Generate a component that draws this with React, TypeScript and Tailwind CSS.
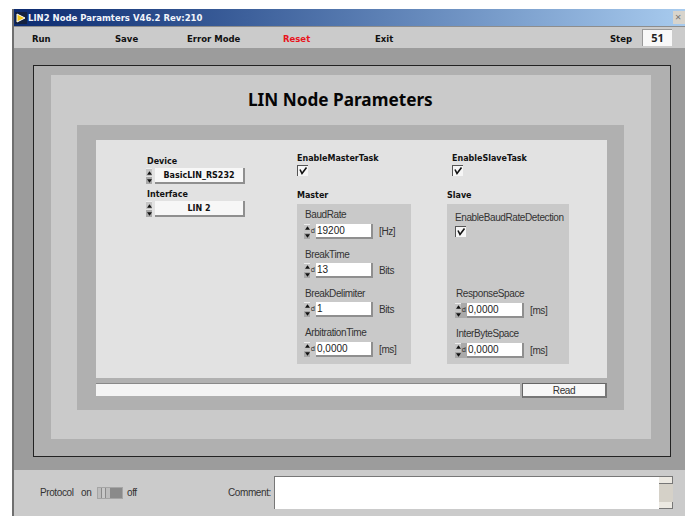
import type { ReactNode } from "react";

const bold = "font-bold text-[8px] leading-[12px] text-[#111] [font-family:'DejaVu_Sans',sans-serif]";
const strip = "font-bold text-[8.5px] leading-[12px] text-[#111] [font-family:'DejaVu_Sans',sans-serif]";
const plain = "text-[10px] leading-[12px] tracking-[-0.4px] text-[#333] [font-family:'Liberation_Sans',sans-serif]";

function Check({ className = "" }: { className?: string }) {
  return (
    <div className={`w-[11px] h-[11px] bg-[#f6f6f6] border-l border-t border-[#555] ${className}`}>
      <svg viewBox="0 0 10 10" className="w-[10px] h-[10px]">
        <path d="M2 3.5 L4 7.5 L8.5 1.5" fill="none" stroke="#111" strokeWidth="1.6" />
      </svg>
    </div>
  );
}

// up/down arrows used by the ring and numeric controls
function Spinner() {
  return (
    <div className="w-[6px] h-full flex flex-col gap-px shrink-0">
      <div className="flex-1 bg-[#c4c4c4] border-t border-[#eee] flex items-center justify-center">
        <svg viewBox="0 0 6 4" className="w-[5px] h-[4px]"><path d="M3 0 L6 4 L0 4 Z" fill="#111" /></svg>
      </div>
      <div className="flex-1 bg-[#a8a8a8] flex items-center justify-center">
        <svg viewBox="0 0 6 4" className="w-[5px] h-[4px]"><path d="M0 0 L6 0 L3 4 Z" fill="#111" /></svg>
      </div>
    </div>
  );
}

function Ring({ label, value, top }: { label: string; value: string; top: string }) {
  return (
    <div className={top}>
      <div className={`${bold} pl-px`}>{label}</div>
      <div className="flex h-[16px] items-stretch">
        <Spinner />
        <div className={`${bold} ml-[3px] w-[90px] bg-[#f7f7f7] border-r-2 border-b-2 border-[#8f8f8f] text-center !leading-[16px]`}>
          {value}
        </div>
      </div>
    </div>
  );
}

function NumRow({ value, unit, tint }: { value: string; unit: string; tint?: boolean }) {
  return (
    <div className="flex h-[15px] items-stretch">
      <Spinner />
      <div className={`w-[6px] text-[7px] leading-[13px] text-[#333] text-right pr-px ${tint ? "bg-[#aaaaaa]" : ""}`}>d</div>
      <div className="w-[57px] pl-px bg-white border-r-2 border-b-2 border-[#8f8f8f] text-[10px] leading-[14px] text-[#222] [font-family:'Liberation_Sans',sans-serif]">
        {value}
      </div>
      <div className={`${plain} ml-[6px] !leading-[15px]`}>{unit}</div>
    </div>
  );
}

function Labeled({ label, className, children }: { label: string; className: string; children: ReactNode }) {
  return (
    <div className={className}>
      <div className={plain}>{label}</div>
      {children}
    </div>
  );
}

function Menu({ w, red, children }: { w: string; red?: boolean; children: ReactNode }) {
  return <div className={`${w} ${strip} pt-[3px] ${red ? "!text-[#e8141c]" : ""}`}>{children}</div>;
}

export default function App() {
  return (
    <div
      className="w-[685px] h-[518px] overflow-hidden bg-white pl-[12px] pt-[9px]"
      style={{ fontFamily: '"Noto Sans", "Liberation Sans", sans-serif' }}
    >
      <div className="h-[507px] border-l-2 border-[#6f6f6f] flex flex-col">
        {/* title bar */}
        <div className="h-[17px] shrink-0 flex items-center bg-gradient-to-r from-[#0c2a70] to-[#a8cbee] pl-px">
          <svg viewBox="0 0 12 12" className="w-[12px] h-[12px] shrink-0">
            <rect width="12" height="12" fill="#14213f" />
            <path d="M2 2 L10 6 L2 10 Z" fill="#f2c81e" stroke="#fff" strokeWidth="1" />
          </svg>
          <span className={`${strip} ml-[1px] pt-px !text-[#f2f5fb]`}>LIN2 Node Paramters V46.2 Rev:210</span>
          <div className="ml-auto w-[12px] h-[13px] bg-[#d8d4cc] text-[11px] leading-[12px] text-[#777] pl-[2px]">×</div>
        </div>
        <div className="h-px shrink-0 bg-[#8d8d8d]" />

        {/* menu strip */}
        <div className="h-[21px] shrink-0 bg-[#cbcbcb] flex items-center pl-[18px]">
          <Menu w="w-[83px]">Run</Menu>
          <Menu w="w-[72px]">Save</Menu>
          <Menu w="w-[96px]">Error Mode</Menu>
          <Menu w="w-[92px]" red>Reset</Menu>
          <Menu w="w-[235px]">Exit</Menu>
          <Menu w="w-[32px]">Step</Menu>
          <div className="w-[30px] h-[17px] bg-[#f8f8f8] border-t border-l border-[#999] font-bold text-[11px] leading-[15px] text-[#222] text-center">51</div>
        </div>

        {/* main area */}
        <div className="h-[422px] shrink-0 bg-[#9c9c9c] pl-[19px] pt-[17px]">
          <div className="w-[638px] h-[392px] border border-[#222] bg-[#b0b0b0] pl-[17px] pt-[9px]">
            <div className="w-[600px] h-[364px] bg-[#cacaca] pt-[14px]">
              <div className="pl-[197px] font-bold text-[17.2px] leading-[22px] text-[#050505]">LIN Node Parameters</div>
              <div className="ml-[26px] mt-[14px] w-[547px] h-[285px] bg-[#b0b0b0] pl-[19px] pt-[15px]">
                <div className="w-[511px] h-[238px] bg-[#e2e2e2] flex">
                  {/* device column */}
                  <div className="ml-[50px] w-[151px] shrink-0">
                    <Ring label="Device" value="BasicLIN_RS232" top="mt-[16px]" />
                    <Ring label="Interface" value="LIN 2" top="mt-[5px]" />
                  </div>

                  {/* master column */}
                  <div className="w-[150px] shrink-0">
                    <div className={`${bold} mt-[13px]`}>EnableMasterTask</div>
                    <Check />
                    <div className={`${bold} mt-[14px]`}>Master</div>
                    <div className="mt-[2px] w-[114px] h-[160px] bg-[#c9c9c9] pl-[7px] pt-[5px]">
                      <Labeled label="BaudRate" className="pl-px">
                        <div className="-ml-px mt-[3px]"><NumRow value="19200" unit="[Hz]" /></div>
                      </Labeled>
                      <Labeled label="BreakTime" className="pl-px mt-[10px]">
                        <div className="-ml-px mt-[2px]"><NumRow value="13" unit="Bits" /></div>
                      </Labeled>
                      <Labeled label="BreakDelimiter" className="pl-px mt-[10px]">
                        <div className="-ml-px mt-[2px]"><NumRow value="1" unit="Bits" /></div>
                      </Labeled>
                      <Labeled label="ArbitrationTime" className="pl-px mt-[10px]">
                        <div className="-ml-px mt-[3px]"><NumRow value="0,0000" unit="[ms]" /></div>
                      </Labeled>
                    </div>
                  </div>

                  {/* slave column */}
                  <div className="shrink-0">
                    <div className={`${bold} mt-[13px] pl-[5px]`}>EnableSlaveTask</div>
                    <Check className="ml-[5px]" />
                    <div className={`${bold} mt-[14px]`}>Slave</div>
                    <div className="mt-[2px] w-[122px] h-[160px] bg-[#c9c9c9] pl-[8px] pt-[8px]">
                      <div className={plain}>EnableBaudRateDetection</div>
                      <Check className="mt-[2px]" />
                      <Labeled label="ResponseSpace" className="pl-px mt-[51px]">
                        <div className="-ml-px mt-[3px]"><NumRow value="0,0000" unit="[ms]" tint /></div>
                      </Labeled>
                      <Labeled label="InterByteSpace" className="pl-px mt-[10px]">
                        <div className="-ml-px mt-[3px]"><NumRow value="0,0000" unit="[ms]" tint /></div>
                      </Labeled>
                    </div>
                  </div>
                </div>

                {/* progress + read */}
                <div className="flex w-[511px] mt-[5px]">
                  <div className="w-[424px] h-[13px] bg-[#f4f4f4] border-t border-[#888]" />
                  <div className={`${plain} ml-[2px] flex-1 h-[15px] bg-[#f7f7f7] border-t border-l border-[#666] border-r-2 border-b-2 border-r-[#777] border-b-[#777] text-center !leading-[13px]`}>
                    Read
                  </div>
                </div>
              </div>
            </div>
          </div>
        </div>

        {/* status strip */}
        <div className="flex-1 bg-[#cbcbcb] flex items-start pl-[26px] pt-[6px]">
          <div className={`${plain} mt-[11px] w-[41px]`}>Protocol</div>
          <div className={`${plain} mt-[11px] w-[16px]`}>on</div>
          <div className="mt-[11px] w-[26px] h-[12px] bg-[#8a8a8a] flex border border-[#a5a5a5]">
            <div className="w-[4px] bg-[#bdbdbd] border-r border-[#8a8a8a]" />
            <div className="w-[4px] bg-[#c8c8c8] border-r border-[#8a8a8a]" />
            <div className="w-[4px] bg-[#bdbdbd]" />
          </div>
          <div className={`${plain} mt-[11px] ml-[4px] w-[101px]`}>off</div>
          <div className={`${plain} mt-[11px] w-[46px]`}>Comment:</div>
          <div className="w-[399px] h-[33px] bg-white border-t border-l border-[#777] flex justify-end">
            <div className="w-[14px] h-full bg-[#d5d1c8] flex flex-col justify-between">
              <div className="h-[7px] bg-[#ece9e2] border-b border-r border-[#777]" />
              <div className="h-[7px] bg-[#ece9e2] border-b border-r border-[#777]" />
            </div>
          </div>
        </div>
      </div>
    </div>
  );
}
